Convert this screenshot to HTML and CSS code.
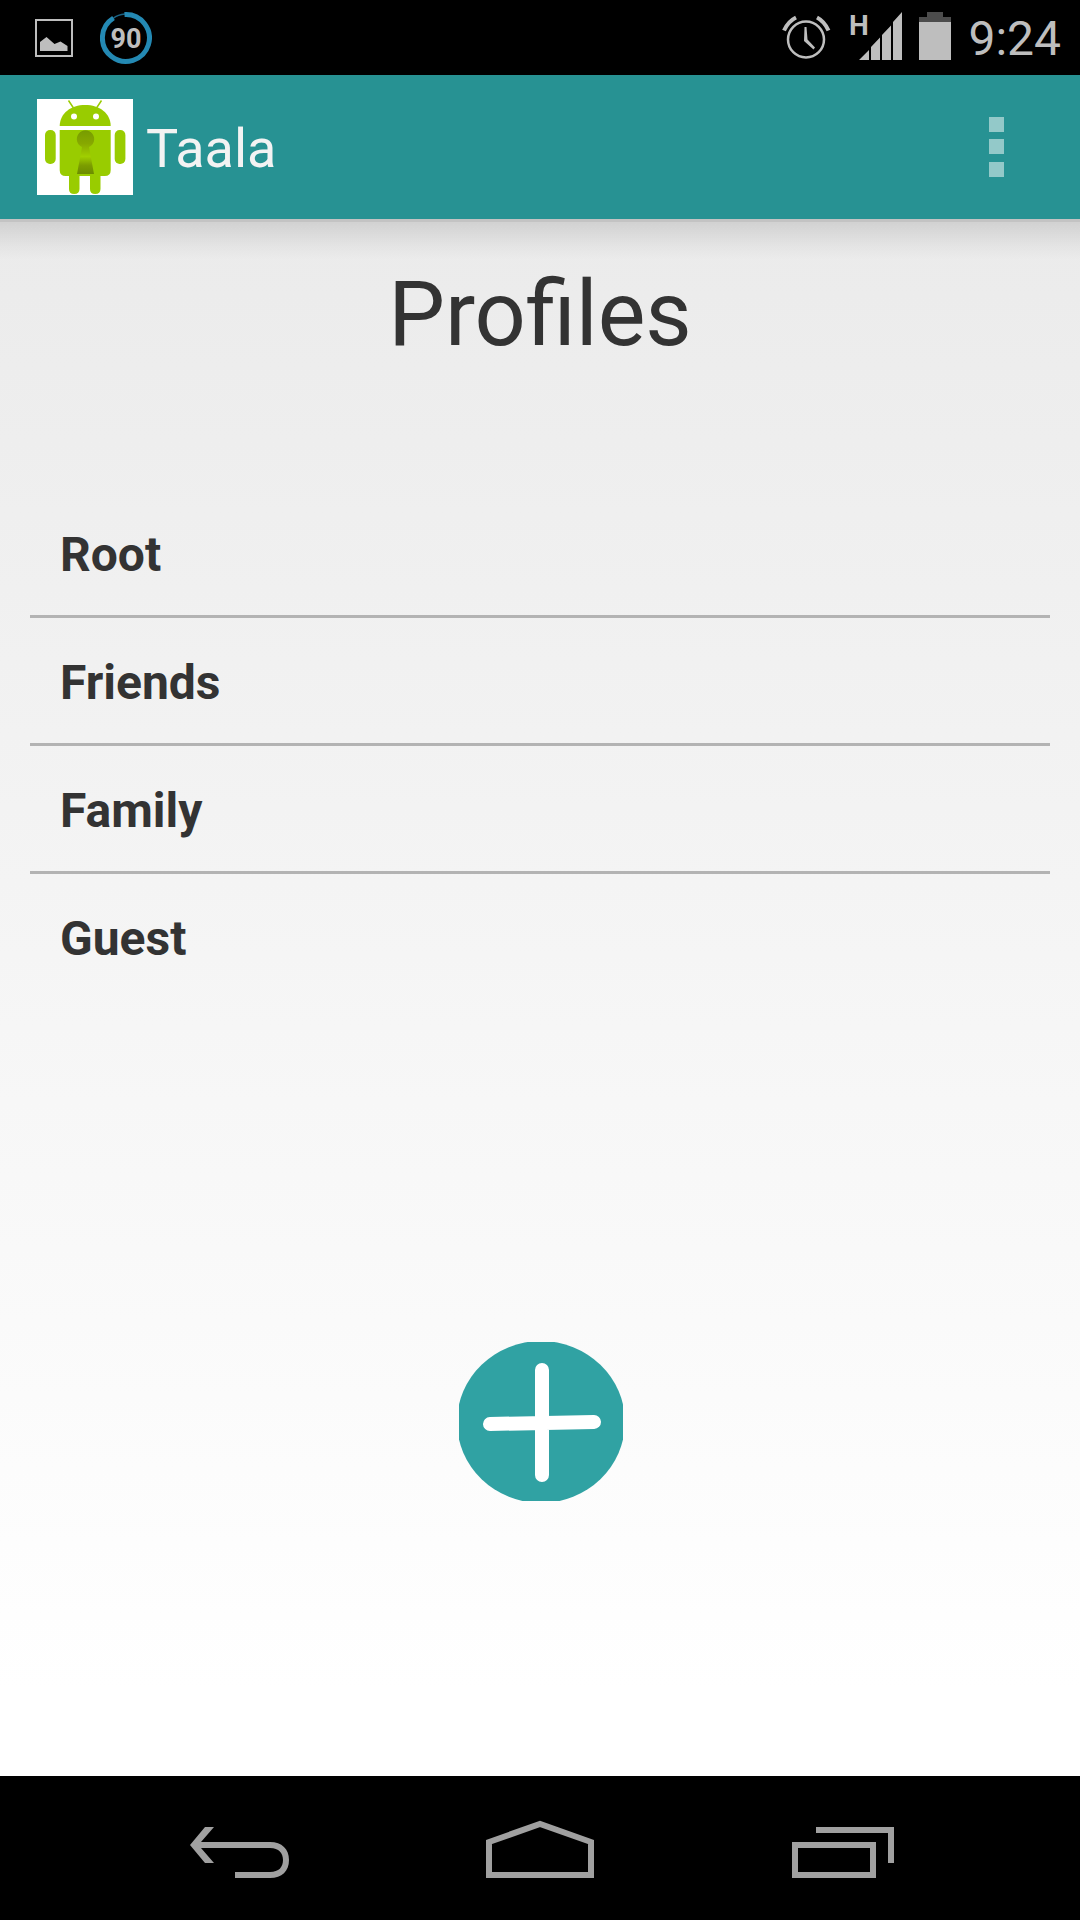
FILE: index.html
```
<!DOCTYPE html>
<html lang="en">
<head>
    <meta charset="UTF-8">
    <meta name="viewport" content="width=device-width, initial-scale=1.0">
    <title>Taala</title>
    <link rel="stylesheet" href="styles.css">
</head>
<body>

<div class="status-bar">
    <svg class="status-picture" width="38" height="75" viewBox="35 0 38 75" aria-hidden="true">
        <rect x="36" y="20" width="36" height="36" fill="none" stroke="#bebebe" stroke-width="2"/>
        <path d="M40 51V42L46.500 37L54.500 44L60.500 41.500L67.500 46V51Z" fill="#bebebe"/>
    </svg>
    <svg width="52" height="75" viewBox="100 0 52 75" aria-hidden="true">
        <path d="M113 18.500Q118 14.500 125 14" fill="none" stroke="#1c6384" stroke-width="1.500"/>
        <path d="M124.500 14.500A23.500 23.500 0 1 1 113.500 18" fill="none" stroke="#2489b3" stroke-width="5"/>
        <text class="level" x="126" y="48" text-anchor="middle">90</text>
    </svg>
    <div class="status-right">
        <svg width="49" height="75" viewBox="782 0 49 75" aria-hidden="true">
            <g fill="none" stroke="#bebebe">
                <circle cx="806" cy="39.500" r="18" stroke-width="2.500"/>
                <path d="M784 30.500Q788 21.500 796 17.500M828.500 30.500Q824.500 21.500 817 17.500" stroke-width="4"/>
            </g>
            <path d="M804.500 27H806.500L807.500 39.500L815 47.500L813.500 49.500L804 41Z" fill="#bebebe"/>
        </svg>
        <svg width="54" height="75" viewBox="848 0 54 75" aria-hidden="true">
            <text class="network" x="859" y="35" text-anchor="middle">H</text>
            <path d="M859 60L869 50V60ZM871 60V47L880 37.500V60ZM882 60V35L891 25.500V60ZM893 60V22L902 12V60Z" fill="#bebebe"/>
        </svg>
        <svg width="32" height="75" viewBox="919 0 32 75" aria-hidden="true">
            <path d="M919 22V17H927V12H943V17H951V22Z" fill="#4c4c4c"/>
            <rect x="919" y="22" width="32" height="38" fill="#bebebe"/>
        </svg>
        <span class="clock">9:24</span>
    </div>
</div>

<header class="action-bar">
    <svg width="96" height="96" viewBox="0 0 96 96" aria-hidden="true">
        <defs>
            <linearGradient id="keyhole" x1="0" y1="0" x2="0" y2="1">
                <stop offset="0" stop-color="#779c00"/>
                <stop offset="0.300" stop-color="#87a800"/>
                <stop offset="0.600" stop-color="#a0cf00"/>
                <stop offset="0.800" stop-color="#7c9d00"/>
                <stop offset="1" stop-color="#6c8c00"/>
            </linearGradient>
        </defs>
        <rect width="96" height="96" fill="#fff"/>
        <g fill="#99cc00">
            <path d="M22.700 27C23 14 34 6 48.200 6S73.500 14 73.700 27Z"/>
            <path d="M22.700 31H73.700V71Q73.700 77 67.700 77H28.700Q22.700 77 22.700 71Z"/>
            <rect x="8" y="31" width="10.700" height="34" rx="5"/>
            <rect x="77.700" y="31" width="10.700" height="34" rx="5"/>
            <path d="M32 76H42.500V90Q42.500 95 37.200 95T32 90ZM53 76H63.500V90Q63.500 95 58.200 95T53 90Z"/>
        </g>
        <path d="M31.500 1.500L36.500 9M64.500 1.500L59.500 9" stroke="#99cc00" stroke-width="1.500"/>
        <circle cx="37" cy="17.500" r="3" fill="#fff"/>
        <circle cx="59" cy="17.500" r="3" fill="#fff"/>
        <path d="M45 48A8.700 8.700 0 1 1 52 48L57 75H40Z" fill="url(#keyhole)"/>
    </svg>
    <span class="app-name">Taala</span>
    <button class="overflow" type="button" aria-label="More options">
        <svg width="15" height="60" viewBox="0 0 15 60">
            <path d="M0 0H15V15H0ZM0 22H15V37H0ZM0 45H15V60H0Z" fill="#93c9c9"/>
        </svg>
    </button>
</header>

<main class="content">
    <h1>Profiles</h1>
    <ul class="profiles">
        <li><a href="#root">Root</a></li>
        <li><a href="#friends">Friends</a></li>
        <li><a href="#family">Family</a></li>
        <li><a href="#guest">Guest</a></li>
    </ul>
    <button class="add" type="button" aria-label="Add profile">
        <svg width="168" height="160" viewBox="0 0 168 160">
            <clipPath id="disc">
                <rect x="3" y="1" width="164" height="159"/>
            </clipPath>
            <ellipse cx="85" cy="81" rx="84" ry="81" fill="#30a2a3" clip-path="url(#disc)"/>
            <path d="M86 29V134M34 83L138 81" stroke="#fff" stroke-width="14" stroke-linecap="round"/>
        </svg>
    </button>
</main>

<nav class="nav-bar">
    <button type="button" aria-label="Back">
        <svg width="120" height="120" viewBox="180 1788 120 120">
            <path d="M190 1845L205 1827H214L201 1842H270C282 1842 289 1849 289 1860S282 1878 270 1878H235V1872H270C279 1872 283 1867 283 1860S279 1848 270 1848H201L214 1863H205Z" fill="#a0a0a0"/>
        </svg>
    </button>
    <button type="button" aria-label="Home">
        <svg width="120" height="120" viewBox="480 1788 120 120">
            <path d="M489 1875V1842L540 1824L591 1842V1875Z" fill="none" stroke="#a0a0a0" stroke-width="6"/>
        </svg>
    </button>
    <button type="button" aria-label="Recent apps">
        <svg width="120" height="120" viewBox="780 1788 120 120">
            <path d="M795 1845H873V1875H795ZM816 1830H891V1863" fill="none" stroke="#a0a0a0" stroke-width="6"/>
        </svg>
    </button>
</nav>

</body>
</html>
```
FILE: styles.css
```
* {
    box-sizing: border-box;
}
body {
    font-family: Roboto, sans-serif;
    margin: 0;
    min-height: 100vh;
    display: flex;
    flex-direction: column;
    color: #333;
    background: linear-gradient(#e8e8e8, #fff 88%);
}
button {
    display: flex;
    align-items: center;
    justify-content: center;
    padding: 0;
    border: none;
    background: none;
    cursor: pointer;
}
svg {
    display: block;
    flex-shrink: 0;
}
.status-bar {
    display: flex;
    align-items: center;
    height: 75px;
    padding: 0 19px 0 35px;
    background: #000;
    color: #bebebe;
}
.status-picture {
    margin-right: 27px;
}
.status-right {
    display: flex;
    align-items: center;
    gap: 17px;
    margin-left: auto;
}
.level {
    font-size: 27px;
    font-weight: bold;
    fill: #bebebe;
}
.network {
    font-family: "Liberation Sans Narrow", Roboto, sans-serif;
    font-size: 28px;
    font-weight: bold;
    fill: #bebebe;
}
.clock {
    font-size: 48px;
    padding-top: 2px;
}
.action-bar {
    display: flex;
    align-items: center;
    gap: 13px;
    height: 144px;
    padding: 0 36px 0 37px;
    background: #279293;
}
.app-name {
    font-size: 54px;
    padding-top: 2px;
    color: #f3f3f3;
}
.overflow {
    width: 96px;
    height: 96px;
    margin-left: auto;
}
.content {
    flex: 1;
    display: flex;
    flex-direction: column;
    padding: 42px 30px 275px;
    background: linear-gradient(rgba(0, 0, 0, 0.11), rgba(0, 0, 0, 0.03) 24px, transparent 38px);
    border-top: 3px solid #c3c3c3;
}
.content h1 {
    margin: 0;
    font-size: 90px;
    font-weight: normal;
    line-height: 102px;
    text-align: center;
}
.profiles {
    list-style: none;
    margin: 124px 0 0;
    padding: 0;
}
.profiles li + li {
    border-top: 3px solid #b3b3b3;
}
.profiles a {
    display: block;
    padding: 37px 30px 32px;
    color: #333;
    font-size: 48px;
    font-weight: bold;
    line-height: 56px;
    text-decoration: none;
}
.add {
    margin: auto auto 0;
}
.nav-bar {
    display: flex;
    justify-content: center;
    gap: 180px;
    height: 144px;
    background: #000;
}
```
